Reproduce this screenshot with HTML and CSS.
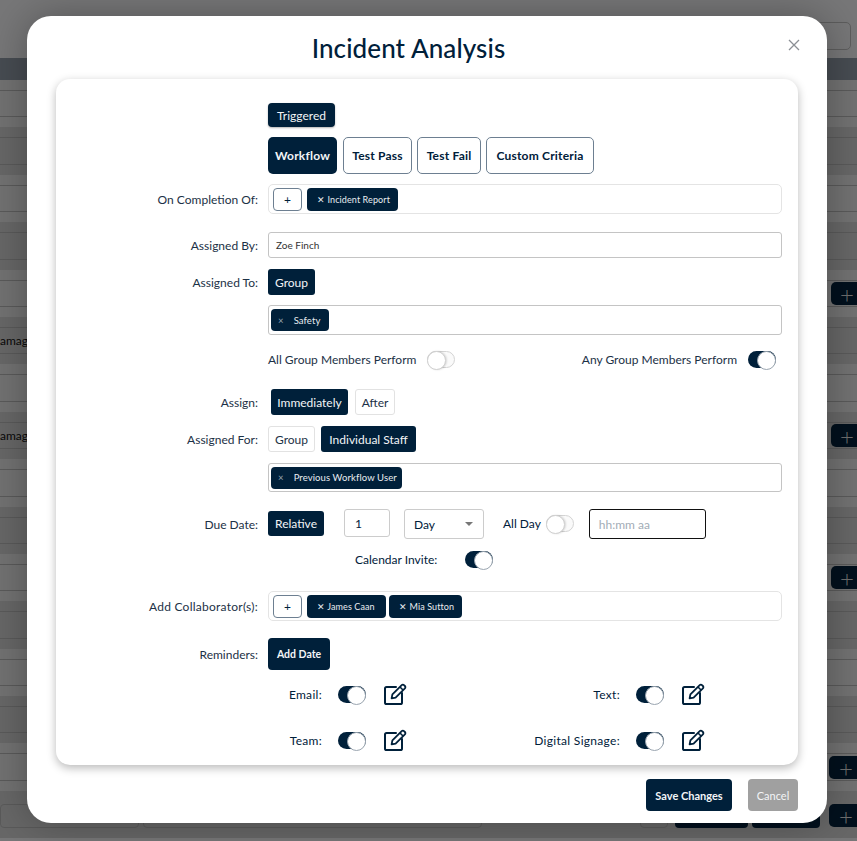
FILE: index.html
```html
<!DOCTYPE html>
<html lang="en">
<head>
    <meta charset="UTF-8">
    <meta name="viewport" content="width=device-width, initial-scale=1.0">
    <title>Incident Analysis</title>
    <link rel="stylesheet" href="styles.css">
</head>
<body>
    <div class="page">
        <div class="page-top"><div class="page-search"></div></div>
        <div class="page-head"></div>
        <div class="page-row"><div class="cell"></div></div>
        <div class="page-row"><div class="cell"></div></div>
        <div class="page-row"><div class="cell"></div></div>
        <div class="page-row"><div class="cell"></div></div>
        <div class="page-row"><div class="cell"><span class="row-add">+</span></div></div>
        <div class="page-row"><div class="cell"><span class="row-text">amag</span></div></div>
        <div class="page-row"><div class="cell"></div></div>
        <div class="page-row"><div class="cell"><span class="row-text">amag</span><span class="row-add">+</span></div></div>
        <div class="page-row"><div class="cell"></div></div>
        <div class="page-row"><div class="cell"></div></div>
        <div class="page-row"><div class="cell"><span class="row-add">+</span></div></div>
        <div class="page-row"><div class="cell"></div></div>
        <div class="page-row"><div class="cell"></div></div>
        <div class="page-row"><div class="cell"></div></div>
        <div class="page-row"><div class="cell"><span class="row-add row-add-wide">+</span></div></div>
        <div class="page-row page-row-last">
            <div class="cell">
                <span class="ghost ghost-a"></span>
                <span class="ghost ghost-b"></span>
                <span class="ghost ghost-c"></span>
                <span class="ghost-dark ghost-d"></span>
                <span class="ghost-dark ghost-e"></span>
                <span class="row-add row-add-wide">+</span>
            </div>
        </div>
    </div>

    <div class="overlay">
        <div class="modal">
            <div class="modal-head">
                <h1>Incident Analysis</h1>
                <span class="close">
                    <svg width="12" height="12" viewBox="0 0 12 12"><path d="M1 1l10 10M11 1L1 11" stroke="#8b8f94" stroke-width="1.3" fill="none"/></svg>
                </span>
            </div>

            <div class="card">
                <div class="line line-triggered">
                    <span class="label"></span>
                    <div class="field"><span class="btn solid btn-triggered">Triggered</span></div>
                </div>
                <div class="line line-types">
                    <span class="label"></span>
                    <div class="field types">
                        <span class="btn solid btn-type">Workflow</span>
                        <span class="btn outline btn-type">Test Pass</span>
                        <span class="btn outline btn-type">Test Fail</span>
                        <span class="btn outline btn-type">Custom Criteria</span>
                    </div>
                </div>
                <div class="line line-completion">
                    <span class="label">On Completion Of:</span>
                    <div class="field box box-light">
                        <span class="add-tag">+</span>
                        <span class="tag tag-incident">&#10005;&nbsp;Incident Report</span>
                    </div>
                </div>
                <div class="line line-by">
                    <span class="label">Assigned By:</span>
                    <div class="field text-input">Zoe Finch</div>
                </div>
                <div class="line line-to">
                    <span class="label">Assigned To:</span>
                    <div class="field"><span class="btn solid btn-small">Group</span></div>
                </div>
                <div class="line line-safety">
                    <span class="label"></span>
                    <div class="field box box-multi">
                        <span class="tag tag-multi tag-safety"><i>&times;</i>Safety</span>
                    </div>
                </div>
                <div class="line line-perform">
                    <span class="label"></span>
                    <div class="field perform">
                        <span class="pair"><span class="perform-text">All Group Members Perform</span><span class="toggle off"></span></span>
                        <span class="pair"><span class="perform-text">Any Group Members Perform</span><span class="toggle"></span></span>
                    </div>
                </div>
                <div class="line line-assign">
                    <span class="label">Assign:</span>
                    <div class="field assign">
                        <span class="btn solid btn-small btn-immediately">Immediately</span>
                        <span class="btn plain btn-small btn-after">After</span>
                    </div>
                </div>
                <div class="line line-for">
                    <span class="label">Assigned For:</span>
                    <div class="field assigned-for">
                        <span class="btn plain btn-small">Group</span>
                        <span class="btn solid btn-small btn-staff">Individual Staff</span>
                    </div>
                </div>
                <div class="line line-prev">
                    <span class="label"></span>
                    <div class="field box box-multi">
                        <span class="tag tag-multi tag-prev"><i>&times;</i>Previous Workflow User</span>
                    </div>
                </div>
                <div class="line line-due">
                    <span class="label">Due Date:</span>
                    <div class="field due">
                        <span class="btn solid btn-relative">Relative</span>
                        <span class="number-input">1</span>
                        <span class="select">Day<b class="caret"></b></span>
                        <span class="allday">All Day</span>
                        <span class="toggle off"></span>
                        <span class="time-input">hh:mm aa</span>
                    </div>
                </div>
                <div class="line line-invite">
                    <span class="label"></span>
                    <div class="field invite">
                        <span>Calendar Invite:</span>
                        <span class="toggle"></span>
                    </div>
                </div>
                <div class="line line-collab">
                    <span class="label">Add Collaborator(s):</span>
                    <div class="field box box-light">
                        <span class="add-tag">+</span>
                        <span class="tag tag-james">&#10005;&nbsp;James Caan</span>
                        <span class="tag tag-mia">&#10005;&nbsp;Mia Sutton</span>
                    </div>
                </div>
                <div class="line line-reminders">
                    <span class="label">Reminders:</span>
                    <div class="field"><span class="btn solid btn-date">Add Date</span></div>
                </div>
                <div class="notify notify-first">
                    <div class="notify-item notify-left">
                        <span>Email:</span><span class="toggle"></span>
                        <svg class="edit" width="24" height="22" viewBox="0 0 24 22"><use href="#edit-icon"/></svg>
                    </div>
                    <div class="notify-item notify-right">
                        <span>Text:</span><span class="toggle"></span>
                        <svg class="edit" width="24" height="22" viewBox="0 0 24 22"><use href="#edit-icon"/></svg>
                    </div>
                </div>
                <div class="notify">
                    <div class="notify-item notify-left">
                        <span>Team:</span><span class="toggle"></span>
                        <svg class="edit" width="24" height="22" viewBox="0 0 24 22"><use href="#edit-icon"/></svg>
                    </div>
                    <div class="notify-item notify-right">
                        <span>Digital Signage:</span><span class="toggle"></span>
                        <svg class="edit" width="24" height="22" viewBox="0 0 24 22"><use href="#edit-icon"/></svg>
                    </div>
                </div>
            </div>

            <div class="modal-foot">
                <span class="foot-btn save">Save Changes</span>
                <span class="foot-btn cancel">Cancel</span>
            </div>
        </div>
    </div>

    <svg class="defs" width="0" height="0">
        <symbol id="edit-icon" viewBox="0 0 24 22">
            <path d="M13 4H3.6A1.6 1.6 0 0 0 2 5.6v13.8A1.6 1.6 0 0 0 3.6 21h13.8a1.6 1.6 0 0 0 1.6-1.6V10" fill="none" stroke="#00203a" stroke-width="2" stroke-linecap="round"/>
            <path d="M8.6 15.4l.8-4L18.7 2.1a1.6 1.6 0 0 1 2.3 0l.9.9a1.6 1.6 0 0 1 0 2.3L12.6 14.6z" fill="none" stroke="#00203a" stroke-width="1.8" stroke-linejoin="round"/>
            <path d="M17 4l3 3" fill="none" stroke="#00203a" stroke-width="1.6"/>
        </symbol>
    </svg>
</body>
</html>
```

FILE: styles.css
```css
*{
    box-sizing: border-box;
}
html, body{
    height: 100%;
    margin: 0;
}
body{
    background: #eeeef0;
    color: #00203a;
    font-family: "Lato", "Open Sans", sans-serif;
    font-size: 12px;
    overflow: hidden;
}
.defs{
    display: block;
    height: 0;
}

/* page behind the modal */
.page{
    height: 841px;
    overflow: hidden;
}
.page-top{
    display: flex;
    justify-content: flex-end;
    height: 58px;
    padding: 22px 6px 0 0;
}
.page-search{
    border: 1px solid #bbb;
    border-radius: 5px;
    height: 28px;
    width: 120px;
}
.page-head{
    background: #8f98a5;
    height: 22px;
}
.page-row{
    background: #e4e4e4;
    height: 47.4px;
    padding: 10px 0;
}
.page-row:nth-child(even){
    background: #cfcfcf;
}
.cell{
    align-items: center;
    border-top: 1px solid #b4b4b4;
    border-bottom: 1px solid #b4b4b4;
    display: flex;
    height: 27.4px;
    justify-content: space-between;
}
.row-text{
    color: #111;
}
.row-add{
    align-items: center;
    background: #04203a;
    border-radius: 5px 0 0 5px;
    color: #ddd;
    display: flex;
    font-size: 24px;
    font-weight: 300;
    height: 23px;
    justify-content: center;
    margin-left: auto;
    padding-left: 6px;
    width: 26px;
}
.row-add-wide{
    width: 28px;
}
.page-row-last .cell{
    border: 0;
    gap: 4px;
    padding-top: 2px;
}
.page-row-last .row-add{
    margin-left: 5px;
}
.ghost{
    border: 1px solid #b4b4b4;
    border-radius: 4px;
    height: 24px;
}
.ghost-a{ width: 139px; }
.ghost-b{ width: 339px; }
.ghost-c{ margin-left: auto; width: 28px; }
.ghost-dark{
    background: #04203a;
    border-radius: 4px;
    height: 24px;
}
.ghost-d{ margin-left: 3px; width: 73px; }
.ghost-e{ width: 68px; }

/* modal */
.overlay{
    background: rgba(0, 0, 0, 0.5);
    inset: 0;
    position: absolute;
}
.modal{
    background: #fff;
    border-radius: 24px;
    box-shadow: 0 0 40px rgba(0, 0, 0, 0.3);
    height: 807px;
    margin: 16px 0 0 27px;
    width: 800px;
}
.modal-head{
    display: flex;
    justify-content: center;
    height: 63px;
    padding-right: 37px;
    position: relative;
}
.modal-head h1{
    font-size: 26px;
    font-weight: 500;
    letter-spacing: 0.1px;
    line-height: 32px;
    margin: 16px 0 0;
}
.close{
    position: absolute;
    right: 27px;
    top: 23px;
    line-height: 0;
}
.card{
    border-radius: 14px;
    box-shadow: 0 3px 10px rgba(0, 0, 0, 0.28);
    height: 686px;
    margin: 0 29px;
    padding-top: 24px;
}
.line{
    align-items: center;
    display: grid;
    grid-template-columns: 202px 514px;
    column-gap: 10px;
}
.label{
    color: #1c3146;
    text-align: right;
}
.line-collab .label{
    letter-spacing: 0.25px;
}
.line-types{ margin-top: 10px; }
.line-completion{ margin-top: 10px; }
.line-by{ margin-top: 18px; }
.line-to{ margin-top: 11px; }
.line-safety{ margin-top: 10px; }
.line-perform{ margin-top: 16px; }
.line-assign{ margin-top: 21px; }
.line-for{ margin-top: 11px; }
.line-prev{ margin-top: 11px; }
.line-due{ margin-top: 17px; }
.line-invite{ margin-top: 12px; }
.line-collab{ margin-top: 23px; }
.line-reminders{ margin-top: 17px; }

/* buttons */
.btn{
    align-items: center;
    border-radius: 3px;
    display: inline-flex;
    justify-content: center;
}
.solid{
    background: #00203a;
    color: #f3f5f7;
}
.outline{
    background: #fff;
    border: 1px solid #6d7f91;
    color: #00203a;
}
.plain{
    background: #fff;
    border: 1px solid #e2e2e2;
    color: #1c3146;
}
.btn-triggered{
    border-radius: 4px;
    box-shadow: 0 1px 2px rgba(0, 0, 0, 0.3);
    height: 24px;
    width: 67px;
}
.types{
    display: flex;
    gap: 5px;
}
.btn-type{
    border-radius: 5px;
    font-weight: 700;
    height: 37px;
    letter-spacing: 0.2px;
    width: 69px;
}
.btn-type:first-child{
    margin-right: 1px;
}
.btn-type:nth-child(3){
    width: 64px;
}
.btn-type:nth-child(4){
    width: 108px;
}
.btn-small{
    height: 26px;
    min-width: 47px;
}
.btn-immediately{
    width: 77px;
}
.btn-after{
    min-width: 0;
    width: 40px;
}
.btn-staff{
    width: 95px;
}
.btn-relative{
    height: 25px;
    margin-top: 2px;
    width: 56px;
}
.btn-date{
    border-radius: 4px;
    font-size: 10.5px;
    font-weight: 700;
    height: 32px;
    width: 62px;
}

/* tag boxes */
.box{
    align-items: center;
    background: #fff;
    display: flex;
    height: 30px;
}
.line-prev .box{
    height: 29px;
}
.box-light{
    border: 1px solid #e4e4e4;
    border-radius: 5px;
    padding-left: 4px;
}
.box-multi{
    border: 1px solid #c4c4c4;
    border-radius: 3px;
    padding-left: 2px;
}
.add-tag{
    align-items: center;
    border: 1px solid #6d7f91;
    border-radius: 4px;
    display: flex;
    height: 23px;
    justify-content: center;
    width: 29px;
}
.tag{
    align-items: center;
    background: #00203a;
    border-radius: 4px;
    color: #e9edf1;
    display: flex;
    font-size: 9px;
    height: 23px;
    letter-spacing: 0.1px;
    margin-left: 5px;
    padding-left: 10px;
}
.tag-incident{ width: 91px; }
.tag-james{ width: 79px; }
.tag-mia{
    margin-left: 3px;
    width: 73px;
}
.tag-multi{
    font-size: 9.5px;
    height: 22px;
    margin-left: 0;
    padding-left: 7px;
}
.tag-safety{ width: 58px; }
.tag-prev{ width: 131px; }
.tag-multi i{
    color: #9aa6b1;
    font-style: normal;
    margin-right: 10px;
}
.text-input{
    align-items: center;
    border: 1px solid #c4c4c4;
    border-radius: 3px;
    color: #333;
    display: flex;
    font-size: 10px;
    height: 26px;
    padding-left: 7px;
}

/* toggles */
.toggle{
    background: #00203a;
    border-radius: 9px;
    display: inline-block;
    height: 17px;
    position: relative;
    width: 28px;
}
.toggle::after{
    background: #fff;
    border: 1px solid #9aa5b0;
    border-radius: 50%;
    content: "";
    height: 17px;
    position: absolute;
    right: 0;
    top: 0;
    width: 17px;
}
.toggle.off{
    background: #fafafa;
    border: 1px solid #d4d4d4;
}
.toggle.off::after{
    border-color: #d0d0d0;
    box-shadow: 1px 0 2px rgba(0, 0, 0, 0.15);
    left: -1px;
    right: auto;
    top: -1px;
}
.perform{
    display: flex;
    justify-content: space-between;
    padding-right: 6px;
}
.pair{
    align-items: center;
    display: flex;
    gap: 11px;
}
.perform-text{
    color: #1c3146;
}
.assign{
    display: flex;
    gap: 7px;
    padding-left: 3px;
}
.assigned-for{
    display: flex;
    gap: 6px;
}

/* due date */
.due{
    align-items: flex-start;
    display: flex;
}
.number-input{
    align-items: center;
    border: 1px solid #ccc;
    border-radius: 3px;
    display: flex;
    height: 28px;
    margin-left: 20px;
    padding-left: 10px;
    width: 46px;
}
.select{
    align-items: center;
    border: 1px solid #ccc;
    border-radius: 3px;
    display: flex;
    height: 30px;
    justify-content: space-between;
    margin-left: 14px;
    padding: 0 10px 0 9px;
    width: 80px;
}
.caret{
    border-left: 4px solid transparent;
    border-right: 4px solid transparent;
    border-top: 4px solid #777;
}
.allday{
    line-height: 30px;
    margin-left: 19px;
    margin-right: 5px;
}
.due .toggle{
    margin-top: 6px;
}
.time-input{
    align-items: center;
    border: 1px solid #111;
    border-radius: 3px;
    color: #a2acb6;
    display: flex;
    height: 30px;
    margin-left: 15px;
    padding-left: 9px;
    width: 117px;
}
.invite{
    align-items: center;
    display: flex;
    gap: 28px;
    padding-left: 87px;
}

/* reminders */
.notify{
    display: flex;
    height: 20px;
    letter-spacing: 0.3px;
    margin-top: 26px;
}
.notify-first{
    margin-top: 14px;
}
.notify-item{
    align-items: center;
    display: flex;
    height: 20px;
}
.notify-item .toggle{
    margin-left: 16px;
}
.edit{
    margin-left: 17px;
}
.notify-left{
    justify-content: flex-end;
    width: 351px;
}
.notify-right{
    justify-content: flex-end;
    width: 298px;
}

/* footer */
.modal-foot{
    display: flex;
    justify-content: flex-end;
    gap: 16px;
    margin: 14px 29px 0 0;
}
.foot-btn{
    align-items: center;
    border-radius: 4px;
    color: #f3f5f7;
    display: flex;
    font-size: 11px;
    height: 32px;
    justify-content: center;
}
.save{
    background: #00203a;
    font-weight: 700;
    width: 86px;
}
.cancel{
    background: #a0a0a0;
    width: 50px;
}
```
